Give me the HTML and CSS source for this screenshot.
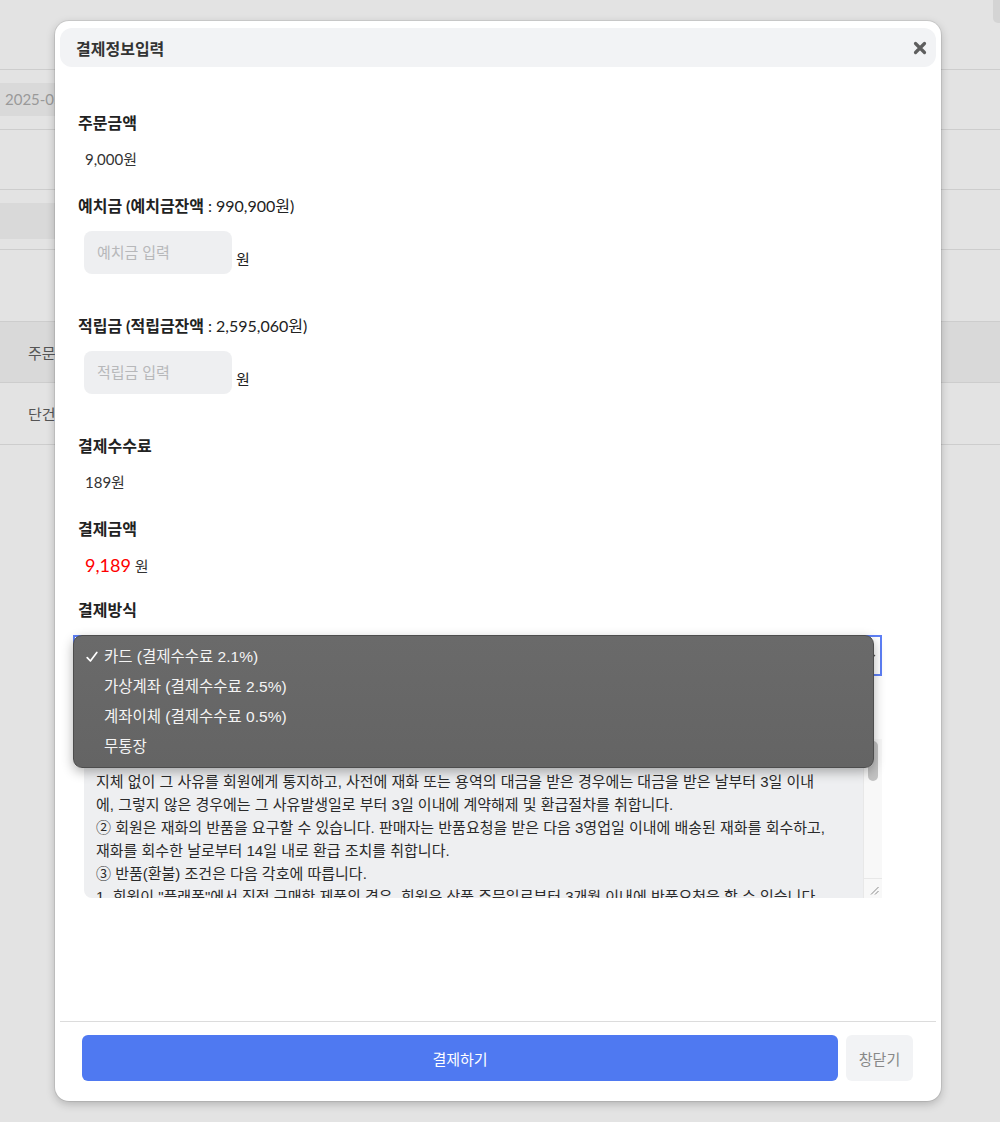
FILE: index.html
```html
<!DOCTYPE html>
<html lang="ko">

<head>

  <meta charset="UTF-8">
  <meta name="viewport" content="width=device-width, initial-scale=1.0">

  <title>결제정보입력</title>

  <link rel="stylesheet" href="styles.css">

</head>

<body>

  <div class="page">
    <div class="page-top"><span class="page-btn"></span></div>
    <div class="page-row"><span class="date-field">2025-05-01 ~ 2025-05-31</span></div>
    <div class="page-row"></div>
    <div class="page-row"><span class="search-field"></span></div>
    <div class="page-gap"></div>
    <div class="table-head">주문유형</div>
    <div class="table-row">단건</div>
  </div>

  <section class="modal">
    <header class="modal_head">
      <h1 class="modal_title">결제정보입력</h1>
      <button class="modal_close" aria-label="닫기">
        <svg width="14" height="14" viewBox="0 0 14 14">
          <path d="M2.5 2.5 L11.5 11.5 M11.5 2.5 L2.5 11.5" stroke="#5e5e5e" stroke-width="3.2" stroke-linecap="round"/>
        </svg>
      </button>
    </header>

    <form class="modal_body">
      <div class="field">
        <h2 class="label">주문금액</h2>
        <p class="value">9,000원</p>
      </div>

      <div class="field field-input">
        <h2 class="label">예치금 (예치금잔액 <span class="thin">: 990,900원)</span></h2>
        <div class="input-row">
          <input type="text" name="deposit" placeholder="예치금 입력">
          <span class="unit">원</span>
        </div>
      </div>

      <div class="field field-input">
        <h2 class="label">적립금 (적립금잔액 <span class="thin">: 2,595,060원)</span></h2>
        <div class="input-row">
          <input type="text" name="point" placeholder="적립금 입력">
          <span class="unit">원</span>
        </div>
      </div>

      <div class="field">
        <h2 class="label">결제수수료</h2>
        <p class="value">189원</p>
      </div>

      <div class="field field-total">
        <h2 class="label">결제금액</h2>
        <p class="value"><b class="total">9,189</b> 원</p>
      </div>

      <div class="field">
        <h2 class="label">결제방식</h2>
        <div class="select-wrap">
          <div class="select-box">
            <span class="select-text">카드 (결제수수료 2.1%)</span>
            <svg class="chevron" width="9" height="6" viewBox="0 0 9 6"><path d="M1 1 L4.5 4.5 L8 1" fill="none" stroke="#555" stroke-width="1.2"/></svg>
          </div>
          <ul class="options">
            <li class="option selected">
              <svg class="check" width="12" height="12" viewBox="0 0 12 12"><path d="M1.2 6.6 L4.4 10 L10.8 1.4" fill="none" stroke="#fff" stroke-width="1.7" stroke-linecap="round" stroke-linejoin="round"/></svg>
              카드 (결제수수료 2.1%)
            </li>
            <li class="option">가상계좌 (결제수수료 2.5%)</li>
            <li class="option">계좌이체 (결제수수료 0.5%)</li>
            <li class="option">무통장</li>
          </ul>
        </div>
      </div>

      <div class="terms-wrap">
        <textarea class="terms" readonly>① 회원이 구매신청한 재화 등이 품절 등의 사유로 인도 또는 제공을 할 수 없을 때에는 판매자는 그 사유를 알게 된 날부터
지체 없이 그 사유를 회원에게 통지하고, 사전에 재화 또는 용역의 대금을 받은 경우에는 대금을 받은 날부터 3일 이내
에, 그렇지 않은 경우에는 그 사유발생일로 부터 3일 이내에 계약해제 및 환급절차를 취합니다.
② 회원은 재화의 반품을 요구할 수 있습니다. 판매자는 반품요청을 받은 다음 3영업일 이내에 배송된 재화를 회수하고,
재화를 회수한 날로부터 14일 내로 환급 조치를 취합니다.
③ 반품(환불) 조건은 다음 각호에 따릅니다.
1. 회원이 "플래폼"에서 직접 구매한 제품의 경우, 회원은 상품 주문일로부터 3개월 이내에 반품요청을 할 수 있습니다.
2. 반품 시 제품은 개봉 및 사용하지 않은 상태여야 하며, 제품의 포장 및 구성품이 모두 동봉되어야 합니다.
3. 회원의 단순 변심으로 인한 반품의 경우 왕복 배송비는 회원이 부담합니다.
4. 제품의 하자 또는 오배송으로 인한 반품의 경우 배송비는 판매자가 부담합니다.
④ 다음 각호에 해당하는 경우에는 반품이 제한될 수 있습니다.
1. 회원에게 책임 있는 사유로 재화가 멸실 또는 훼손된 경우
2. 회원의 사용 또는 일부 소비에 의하여 재화의 가치가 현저히 감소한 경우
3. 시간의 경과에 의하여 재판매가 곤란할 정도로 재화의 가치가 현저히 감소한 경우
4. 복제가 가능한 재화의 포장을 훼손한 경우
⑤ 예치금 및 적립금으로 결제한 금액은 환불 시 예치금 및 적립금으로 반환됩니다.
⑥ 카드 결제의 경우 카드사 정책에 따라 승인 취소가 진행되며, 취소 반영까지 영업일 기준 3~5일이 소요될 수 있습니다.
⑦ 가상계좌 및 계좌이체 결제의 경우 회원이 지정한 환불계좌로 환불금액이 입금됩니다.
⑧ 무통장 입금의 경우 입금 확인 후 주문이 확정되며, 주문일로부터 3일 이내 미입금 시 주문이 자동 취소됩니다.
⑨ 결제수수료는 결제방식에 따라 다르게 적용되며, 반품 시 결제수수료는 환불되지 않습니다.
⑩ 기타 본 약관에서 정하지 않은 사항은 관계 법령 및 상관례에 따릅니다.
</textarea>
        <div class="scrollbar"><span class="scrollbar_thumb"></span></div>
        <div class="scroll-corner">
          <svg width="9" height="9" viewBox="0 0 9 9"><path d="M8.5 1 L1 8.5 M8.5 5 L5 8.5" stroke="#8a8a8a" stroke-width="1"/></svg>
        </div>
      </div>
    </form>

    <footer class="modal_foot">
      <button class="btn btn-pay" type="button">결제하기</button>
      <button class="btn btn-close" type="button">창닫기</button>
    </footer>
  </section>

</body>

</html>
```

FILE: styles.css
```css
* {
  box-sizing: border-box;
}
body {
  margin: 0;
  height: 1122px;
  overflow: hidden;
  position: relative;
  background-color: #e3e3e3;
  font-family: Lato, "Noto Sans CJK KR", sans-serif;
  color: #222;
}

/* page behind the dimmed overlay */
.page-top {
  height: 70px;
  border-bottom: 1px solid #cdcdcd;
  display: flex;
  justify-content: flex-end;
}
.page-btn {
  width: 7px;
  height: 23px;
  background-color: #d4d4d4;
  border-radius: 0 0 0 5px;
}
.page-row {
  height: 60px;
  padding-top: 13px;
  border-bottom: 1px solid #cdcdcd;
}
.date-field {
  display: block;
  width: 300px;
  height: 33px;
  padding-left: 5px;
  background-color: #d9d9d9;
  color: #999;
  font-size: 15px;
  line-height: 33px;
}
.search-field {
  display: block;
  width: 300px;
  height: 36px;
  background-color: #d9d9d9;
}
.page-gap {
  height: 71px;
}
.table-head, .table-row {
  height: 62px;
  padding-left: 28px;
  display: flex;
  align-items: center;
  border-top: 1px solid #cdcdcd;
  border-bottom: 1px solid #cdcdcd;
  color: #555;
  font-size: 15px;
}
.table-head {
  background-color: #d9d9d9;
}
.table-row {
  border-top: 0;
}

/* modal */
.modal {
  position: absolute;
  left: 55px;
  top: 21px;
  width: 886px;
  height: 1080px;
  padding: 7px 5px;
  display: flex;
  flex-direction: column;
  background-color: #fff;
  border-radius: 14px;
  box-shadow: 0 0 0 1px rgba(0, 0, 0, .08), 0 3px 10px rgba(0, 0, 0, .22);
}
.modal_head {
  height: 39px;
  padding: 0 9px 0 16px;
  display: flex;
  justify-content: space-between;
  align-items: center;
  background-color: #f2f3f5;
  border-radius: 12px;
}
.modal_title {
  margin: 0;
  font-size: 16px;
  font-weight: 700;
  color: #333;
}
.modal_close {
  padding: 0;
  border: 0;
  background: none;
  display: flex;
}
.modal_body {
  margin: 0;
  padding: 45px 0 0 18px;
  display: flex;
  flex-direction: column;
}
.field {
  display: flex;
  flex-direction: column;
  gap: 14px;
  margin-bottom: 25px;
}
.field-input {
  margin-bottom: 41px;
}
.field-total {
  margin-bottom: 23px;
}
.label {
  margin: 0;
  height: 22px;
  font-size: 16px;
  font-weight: 700;
  line-height: 22px;
  color: #222;
}
.thin {
  font-weight: 400;
}
.value {
  margin: 0;
  height: 22px;
  padding-left: 7px;
  font-size: 15px;
  line-height: 22px;
  color: #333;
}
.total {
  font-size: 18px;
  font-weight: 400;
  color: #f00;
}
.input-row {
  display: flex;
  align-items: flex-end;
  gap: 4px;
  margin-left: 6px;
}
.input-row input {
  width: 148px;
  height: 43px;
  padding: 0 0 2px 13px;
  border: 0;
  border-radius: 8px;
  outline: 0;
  background-color: #eeeff1;
  font-family: inherit;
  font-size: 15px;
}
.input-row input::placeholder {
  color: #b7b8ba;
}
.unit {
  margin-bottom: 4px;
  font-size: 15px;
  line-height: 22px;
  color: #222;
}

/* select with its open list */
.select-wrap {
  position: relative;
  margin-left: -5px;
  width: 809px;
}
.select-box {
  height: 41px;
  padding: 0 4px 0 10px;
  display: flex;
  align-items: center;
  justify-content: space-between;
  border: 2px solid #5d7ff6;
  background-color: #fff;
  font-size: 15px;
}
.chevron {
  margin-top: 2px;
}
.options {
  position: absolute;
  left: 0;
  top: 0;
  width: 801px;
  height: 133px;
  margin: 0;
  padding: 6px 0 0;
  list-style: none;
  background: linear-gradient(#6a6a6a, #646464);
  border: 1px solid #4d4d4d;
  border-radius: 9px;
  box-shadow: 0 4px 12px rgba(0, 0, 0, .3);
  z-index: 2;
}
.option {
  position: relative;
  height: 30px;
  padding-left: 30px;
  font-family: "Liberation Sans", "Noto Sans CJK KR", sans-serif;
  font-size: 15.5px;
  line-height: 30px;
  color: #f4f4f4;
}
.check {
  position: absolute;
  left: 12px;
  top: 9px;
}

/* terms box with a drawn scrollbar */
.terms-wrap {
  position: relative;
  width: 798px;
  height: 159px;
  margin: 38px 0 0 6px;
  border-radius: 8px 0 0 8px;
  overflow: hidden;
}
.terms {
  display: block;
  width: 100%;
  height: 100%;
  padding: 8px 28px 8px 12px;
  border: 0;
  outline: 0;
  resize: none;
  background-color: #eeeff1;
  font-family: "Liberation Sans", "Noto Sans CJK KR", sans-serif;
  font-size: 15px;
  line-height: 23px;
  color: #2a2a2a;
  white-space: pre;
  overflow: hidden;
}
.scrollbar {
  position: absolute;
  right: 0;
  top: 0;
  bottom: 20px;
  width: 19px;
  background-color: #f8f8f8;
  border-left: 1px solid #e8e8e8;
}
.scrollbar_thumb {
  position: absolute;
  left: 4px;
  top: 2px;
  width: 10px;
  height: 40px;
  background-color: #c3c3c3;
  border-radius: 5px;
}
.scroll-corner {
  position: absolute;
  right: 0;
  bottom: 0;
  width: 19px;
  height: 20px;
  display: flex;
  align-items: flex-end;
  justify-content: flex-end;
  padding: 0 3px 3px 0;
  background-color: #f8f8f8;
  border-left: 1px solid #e8e8e8;
  border-top: 1px solid #e8e8e8;
}

.modal_foot {
  margin-top: auto;
  padding: 13px 23px 13px 22px;
  display: flex;
  gap: 8px;
  border-top: 1px solid #dcdcdc;
}
.btn {
  height: 46px;
  border: 0;
  border-radius: 6px;
  font-family: inherit;
  font-size: 15px;
}
.btn-pay {
  flex: 1;
  background-color: #4f79f1;
  color: #fff;
}
.btn-close {
  width: 67px;
  background-color: #f2f3f5;
  color: #888;
}
```
